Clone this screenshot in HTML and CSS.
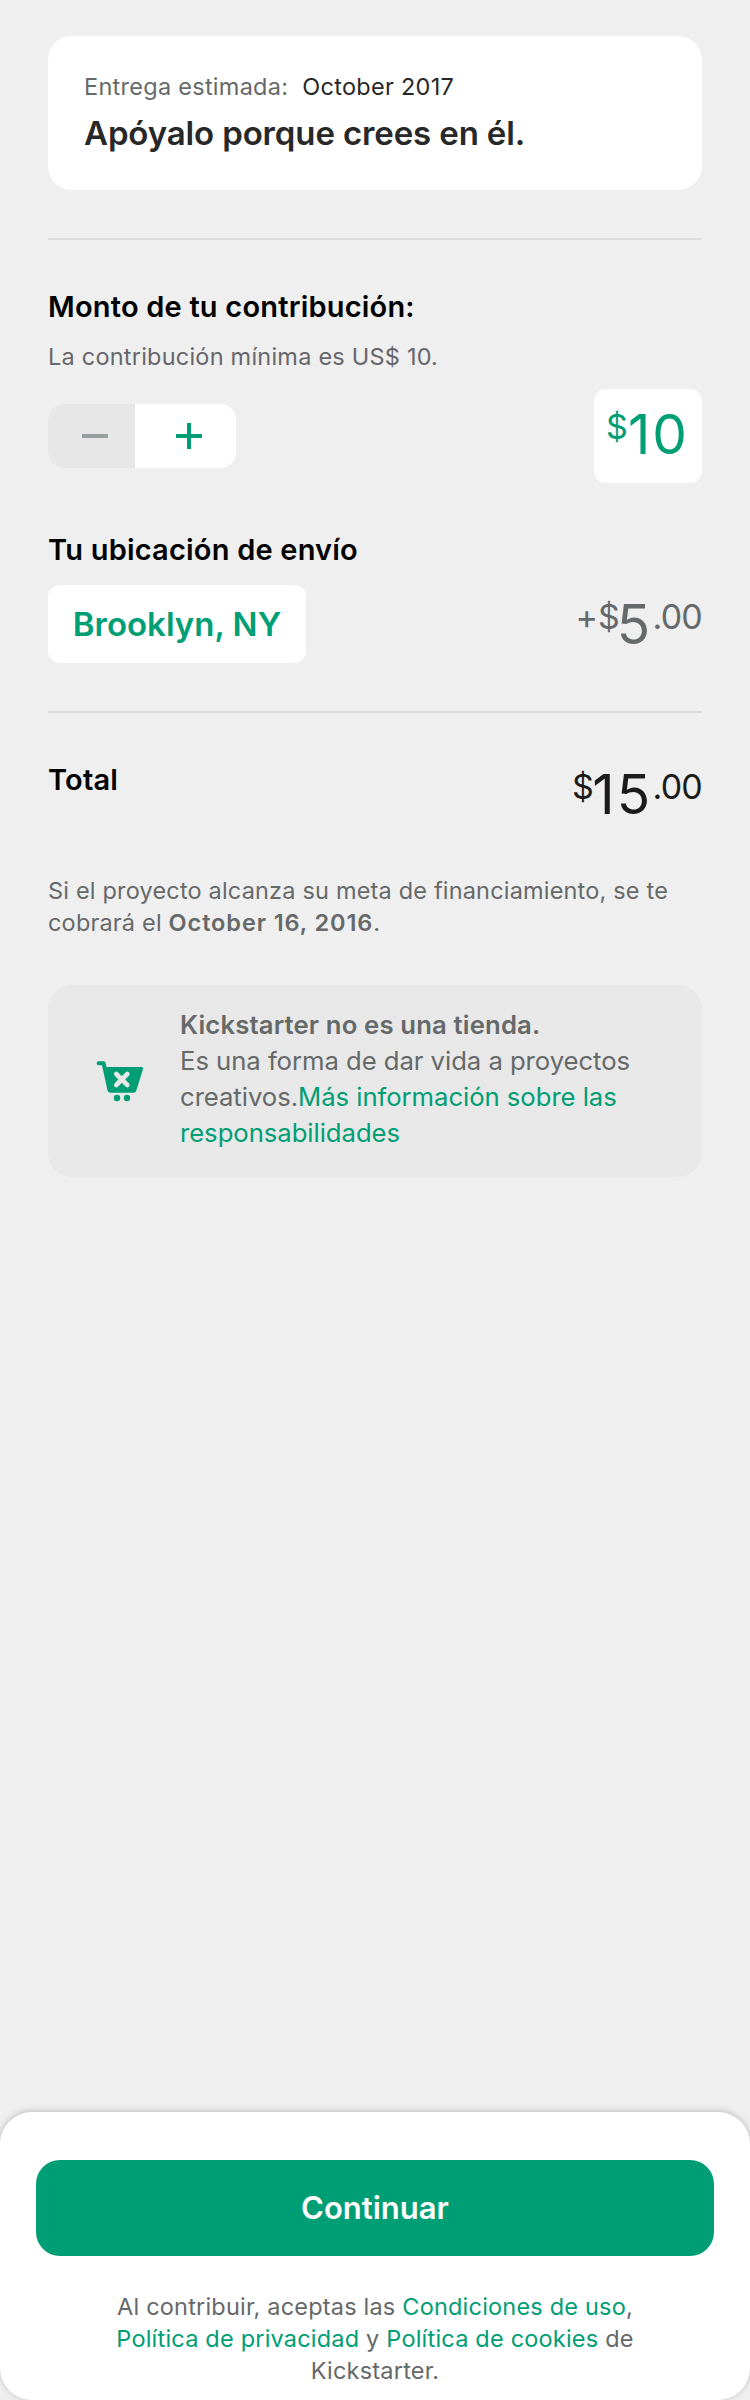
FILE: index.html
```html
<!DOCTYPE html>
<html lang="es">
<head>
<meta charset="utf-8">
<title>Contribución</title>
<link rel="stylesheet" href="styles.css">
</head>
<body>
<div class="page">
  <main class="content">
    <section class="reward">
      <p class="delivery"><span class="label">Entrega estimada:</span><span class="date">October 2017</span></p>
      <h1 class="reward-title">Apóyalo porque crees en él.</h1>
    </section>
    <hr class="divider">
    <h2 class="heading heading-amount">Monto de tu contribución:</h2>
    <p class="minimum">La contribución mínima es US$ 10.</p>
    <div class="pledge-row">
      <div class="stepper">
        <button class="step step-minus" aria-label="Menos"><svg width="26" height="26" viewBox="0 0 26 26"><path d="M0 13H26" stroke="#9b9e9e" stroke-width="4"/></svg></button>
        <button class="step step-plus" aria-label="Más"><svg width="26" height="26" viewBox="0 0 26 26"><path d="M0 13H26M13 0V26" stroke="#009e74" stroke-width="4"/></svg></button>
      </div>
      <div class="pledge-box"><div class="amount amount-pledge"><span class="small">$</span><span class="big">10</span></div></div>
    </div>
    <h2 class="heading heading-location">Tu ubicación de envío</h2>
    <div class="shipping-row">
      <button class="location">Brooklyn, NY</button>
      <div class="amount amount-shipping"><span class="small">+</span><span class="small currency">$</span><span class="big">5</span><span class="small cents">.00</span></div>
    </div>
    <hr class="divider">
    <div class="total-row">
      <h2 class="heading heading-total">Total</h2>
      <div class="amount amount-total"><span class="small currency">$</span><span class="big">15</span><span class="small cents">.00</span></div>
    </div>
    <p class="charge">Si el proyecto alcanza su meta de financiamiento, se te<br>cobrará el <b>October 16, 2016</b>.</p>
    <section class="notice">
      <svg class="cart" width="48" height="42" viewBox="0 0 48 42">
        <path d="M2.600 2.200H7.600L13.500 29" fill="none" stroke="#009e74" stroke-width="4" stroke-linecap="round" stroke-linejoin="round"/>
        <path d="M8 6H45.500Q47.500 6 47 8L40.200 30Q39.600 31.800 37.600 31.800H14.500Q12.600 31.800 12.200 30Z" fill="#009e74"/>
        <path d="M20.300 13L31.300 24M31.300 13L20.300 24" stroke="#e8e8e8" stroke-width="4.600" stroke-linecap="round"/>
        <circle cx="21" cy="37" r="3.200" fill="#009e74"/><circle cx="31" cy="37" r="3.200" fill="#009e74"/>
      </svg>
      <p class="notice-text"><b>Kickstarter no es una tienda.</b><br>Es una forma de dar vida a proyectos<br>creativos.<a>Más información sobre las</a><br><a>responsabilidades</a></p>
    </section>
  </main>
  <footer class="sheet">
    <button class="continue">Continuar</button>
    <p class="legal">Al contribuir, aceptas las <a>Condiciones de uso</a>,<br><a>Política de privacidad</a> y <a>Política de cookies</a> de<br>Kickstarter.</p>
  </footer>
</div>
</body>
</html>
```
FILE: styles.css
```css
* { box-sizing: border-box; }
body { margin: 0; background: #efefef; font-family: Inter, "Liberation Sans", sans-serif; color: #656969; }
h1, h2, p { margin: 0; white-space: nowrap; }
button { border: 0; padding: 0; font-family: inherit; }
a { color: #009e74; }
b { font-weight: 600; }

.page { height: 2400px; display: flex; flex-direction: column; }
.content { padding: 36px 48px 0; }

.reward { height: 154px; padding: 35px 36px 0; background: #fff; border-radius: 24px; }
.delivery { font-size: 23.5px; line-height: 32px; letter-spacing: 0.27px; }
.delivery .date { margin-left: 14px; color: #282828; }
.reward-title { margin-top: 8px; font-size: 33px; line-height: 44px; font-weight: 600; color: #282828; letter-spacing: -0.13px; }

.divider { height: 2px; margin: 48px 0 47px; border: 0; background: #dcdcdc; }
.heading { font-size: 29px; line-height: 40px; font-weight: 600; color: #000; letter-spacing: 0.2px; }
.minimum { margin-top: 14px; font-size: 23.5px; line-height: 32px; letter-spacing: 0.22px; color: #67666b; }

.pledge-row { display: flex; justify-content: space-between; align-items: center; height: 94px; margin-top: 16px; }
.stepper { display: flex; width: 188px; height: 64px; border-radius: 16px; overflow: hidden; background: #fff; }
.step { display: flex; align-items: center; }
.step-minus { width: 87px; padding-left: 34px; background: #e7e7e7; }
.step-plus { width: 101px; padding-left: 41px; background: #fff; }
.pledge-box { width: 108px; height: 94px; padding: 15px 15px 0 0; background: #fff; border-radius: 12px; display: flex; justify-content: flex-end; }

.amount { display: flex; align-items: flex-start; height: 60px; white-space: nowrap; }
.small { margin-top: 3px; font-size: 34px; line-height: 40px; }
.big { margin-right: -2px; font-size: 55px; line-height: 60px; letter-spacing: 2px; }
.cents { margin-left: 2.4px; letter-spacing: -0.8px; }
.amount-pledge { color: #009e74; }
.amount-shipping .currency { margin-right: -3px; }
.amount-total .currency { margin-right: -1.5px; }
.amount-total { color: #1b1b1b; }

.heading-location { margin-top: 47px; }
.shipping-row { display: flex; justify-content: space-between; height: 78px; margin-top: 15px; }
.amount-shipping { margin-top: 9px; }
.location { width: 258px; height: 78px; background: #fff; border-radius: 12px; font-size: 33px; font-weight: 600; line-height: 44px; color: #009e74; }
.total-row { display: flex; justify-content: space-between; height: 64px; }
.amount-total { margin-top: 4px; }

.charge { margin-top: 51px; font-size: 23.5px; line-height: 32px; letter-spacing: 0.18px; }
.charge b { letter-spacing: 0.9px; }

.notice { display: flex; height: 192px; margin-top: 46px; padding: 22px 0 0 48px; background: #e8e8e8; border-radius: 24px; }
.cart { margin-top: 54px; margin-right: 36px; flex: none; }
.notice-text { font-size: 25.7px; line-height: 36px; letter-spacing: -0.05px; }
.notice-text b { letter-spacing: 0.15px; }

.sheet { height: 288px; margin-top: auto; padding: 48px 36px 0; background: #fff; border-radius: 32px; box-shadow: 0 -1px 6px rgba(0, 0, 0, .22); }
.continue { display: block; width: 100%; height: 96px; padding-bottom: 2px; background: #009e74; border-radius: 24px; color: #fff; font-size: 31px; font-weight: 600; }
.legal { margin-top: 35px; font-size: 23.5px; line-height: 32px; letter-spacing: 0.2px; text-align: center; }
```
